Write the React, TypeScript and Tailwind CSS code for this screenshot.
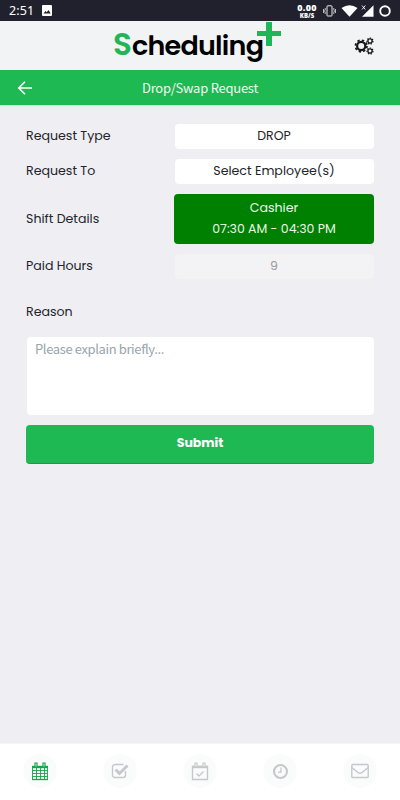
import type { ReactNode } from "react";

const poppins = "font-['Poppins','Inter',sans-serif]";
const source = "font-['Noto_Sans_CJK_SC','Noto_Sans',sans-serif]";

function StatusBar() {
  return (
    <div className="flex h-[21px] shrink-0 items-center bg-[#21212d] text-white">
      <span className="ml-[9px] w-[25px] whitespace-nowrap pt-[2px] font-['Noto_Sans',sans-serif] text-[12.5px] leading-none tracking-[0.1px]">2:51</span>
      <svg className="ml-2" width="10" height="11" viewBox="0 0 10 11">
        <rect width="10" height="11" rx="1" fill="#fff" />
        <path d="M1.5 8.5 3.5 6l1.3 1.3L6.5 5l2.2 3.5z" fill="#21212d" />
      </svg>
      <div className="ml-auto flex w-[20px] flex-col items-center pt-px font-['Open_Sans',sans-serif] font-extrabold">
        <span className="text-[9px] leading-[9px] tracking-[0.3px]">0.00</span>
        <span className="text-[6px] leading-[8px]">KB/S</span>
      </div>
      <svg className="ml-[6px]" width="13" height="12" viewBox="0 0 13 12" fill="none" stroke="#fff" strokeWidth="0.9">
        <rect x="4" y="0.8" width="5" height="10.2" rx="0.6" />
        <path d="M2.2 3v2l-.8 1 .8 1v2M10.8 3v2l.8 1-.8 1v2M.5 4v4M12.5 4v4" strokeWidth="0.7" />
      </svg>
      <svg className="ml-[5px]" width="17" height="12" viewBox="0 0 17 12">
        <path d="M.5 3Q8.5-2.6 16.5 3L8.5 11.8z" fill="#fff" />
      </svg>
      <svg className="ml-[3px]" width="13" height="12" viewBox="0 0 13 12">
        <path d="M12.5.3V11.8H1z" fill="#fff" />
        <path d="m1 .5 3.3 4M4.3.5 1 4.5" stroke="#fff" strokeWidth=".9" />
      </svg>
      <svg className="mr-[9px] ml-[5px]" width="12" height="12" viewBox="0 0 12 12">
        <circle cx="6" cy="6" r="4.8" fill="none" stroke="#fff" strokeWidth="1.9" />
      </svg>
    </div>
  );
}

function Gears() {
  return (
    <svg className="mr-[26px] ml-auto" width="20" height="20" viewBox="0 0 20 20" fill="none" stroke="#15171a">
      <circle cx="7.2" cy="10" r="4.1" strokeWidth="2.2" />
      <circle cx="7.2" cy="10" r="5.8" strokeWidth="1.7" strokeDasharray="2.3 2.255" />
      <circle cx="16" cy="5" r="2.1" strokeWidth="1.3" />
      <circle cx="16" cy="5" r="3" strokeWidth="1.2" strokeDasharray="1.4 1.293" />
      <circle cx="16" cy="15" r="2.1" strokeWidth="1.3" />
      <circle cx="16" cy="15" r="3" strokeWidth="1.2" strokeDasharray="1.4 1.293" />
    </svg>
  );
}

function Header() {
  return (
    <header className="relative flex h-[49px] shrink-0 items-center bg-[#f2f3f5]">
      <div className={`${poppins} mb-[2px] ml-[113px] flex w-[150px] items-baseline whitespace-nowrap font-semibold leading-none`}>
        <span className="text-[31px] text-[#20b657]">S</span>
        <span className="text-[27px] tracking-[-0.75px] text-black">cheduling</span>
      </div>
      <svg className="absolute top-[1px] left-[257px]" width="24" height="24" viewBox="0 0 24 24">
        <path d="M9 0h6v9h9v5h-9v10H9V14H0V9h9z" fill="#20b657" />
      </svg>
      <Gears />
    </header>
  );
}

function TitleBar() {
  return (
    <div className="relative flex h-[35px] shrink-0 items-center justify-center bg-[#1fb954] text-white shadow-[0_1px_1px_#d5e5dc]">
      <svg className="absolute top-[11px] left-[17px]" width="16" height="14" viewBox="0 0 16 14" fill="none" stroke="#fff" strokeWidth="1.6">
        <path d="M15 7H2M8 .8 1.8 7 8 13.2" />
      </svg>
      <span className={`${source} text-[13px] leading-none tracking-[-0.25px] text-[#ecfaf1]`}>Drop/Swap Request</span>
    </div>
  );
}

function Row({ label, className, children }: { label: string; className: string; children: ReactNode }) {
  return (
    <div className={`flex items-center ${className}`}>
      <span className="w-[148px] whitespace-nowrap text-[12.6px] leading-none text-[#24242b]">{label}</span>
      <div className="min-w-0 flex-1">{children}</div>
    </div>
  );
}

function Form() {
  return (
    <main className={`${poppins} flex flex-1 flex-col bg-[#eeeef3] px-[26px] pt-[19px]`}>
      <div className="flex flex-col gap-[10px]">
        <Row label="Request Type" className="h-[25px]">
          <div className="mr-[0.5px] ml-[0.5px] flex h-[25px] items-center justify-center rounded-[4px] bg-white pb-[1px] text-[12.5px] text-[#24242b]">DROP</div>
        </Row>
        <Row label="Request To" className="h-[25px]">
          <div className="mr-[0.5px] ml-[0.5px] flex h-[25px] items-center justify-center rounded-[4px] bg-white pb-px text-[12.6px] text-[#24242b]">Select Employee(s)</div>
        </Row>
        <Row label="Shift Details" className="h-[50px]">
          <div className="flex h-[50px] flex-col items-center rounded-[4px] bg-[#008000] pt-[3px] text-[12.6px] leading-[21px] text-[#e9f7e9]">
            <span>Cashier</span>
            <span className="whitespace-nowrap text-[12.5px]">07:30 AM - 04:30 PM</span>
          </div>
        </Row>
        <Row label="Paid Hours" className="h-[25px]">
          <div className="mr-[0.5px] ml-[0.5px] flex h-[25px] items-center justify-center rounded-[4px] bg-[#f3f3f5] pb-[1px] text-[12.6px] text-[#9b9ba0]">9</div>
        </Row>
      </div>
      <span className="mt-[26px] text-[12.6px] leading-[14px] text-[#24242b]">Reason</span>
      <div className={`${source} mt-[18px] mr-[0.5px] ml-[0.5px] h-[78px] rounded-[4px] bg-white px-[8.5px] pt-[3px] text-[13px] leading-[18px] tracking-[-0.38px] text-[#98a5ab]`}>
        Please explain briefly...
      </div>
      <button className="mt-[10px] h-[39px] rounded-[4px] border-b border-[#189b45] bg-[#1fb954] pb-px text-[12.5px] font-bold text-white">Submit</button>
    </main>
  );
}

function Tab({ children }: { children: ReactNode }) {
  return (
    <div className="flex flex-1 justify-center">
      <div className="flex h-[34px] w-[34px] items-center justify-center rounded-full bg-[#fafcfb]">{children}</div>
    </div>
  );
}

function TabBar() {
  return (
    <nav className="flex h-[56px] shrink-0 items-center bg-white pb-[2px]">
      <Tab>
        <svg width="18" height="19" viewBox="0 0 18 19" fill="none" stroke="#16a34b">
          <path d="M1.5 4.5V17.5h15V4.5M1.5 8.5h15M1.5 11.5h15M1.5 14.5h15M5.5 6v11.5M9.5 6v11.5M13.5 6v11.5" strokeWidth=".9" />
          <path d="M1 5h16" strokeWidth="2.4" />
          <path d="M1 17.5h16" strokeWidth="1.3" />
          <path d="M4 1h2v4H4zM12 1h2v4h-2z" fill="#fff" strokeWidth="1.2" />
        </svg>
      </Tab>
      <Tab>
        <svg width="18" height="18" viewBox="0 0 18 18" fill="none" stroke="#c5c8cb">
          <path d="M14.5 9v4a2.5 2.5 0 0 1-2.5 2.5H4A2.5 2.5 0 0 1 1.5 13V5A2.5 2.5 0 0 1 4 2.5h8.5" strokeWidth="1.4" />
          <path d="m4.5 7.5 4 4L16.5 3.5" strokeWidth="2.9" />
        </svg>
      </Tab>
      <Tab>
        <svg width="18" height="19" viewBox="0 0 18 19" fill="none" stroke="#c5c8cb">
          <path d="M1.5 4.5h15v13h-15z" strokeWidth="1.4" />
          <path d="M1 5h16" strokeWidth="2.4" />
          <path d="M4 1h2v4H4zM12 1h2v4h-2z" fill="#fff" strokeWidth="1.2" />
          <path d="m5.5 11.5 2.5 2.5 4.5-4.5" strokeWidth="1.4" />
        </svg>
      </Tab>
      <Tab>
        <svg width="17" height="17" viewBox="0 0 17 17" fill="none" stroke="#c5c8cb">
          <circle cx="8.5" cy="8.5" r="6.5" strokeWidth="2.1" />
          <path d="M9 4.5v4.7H6" strokeWidth="1.3" />
        </svg>
      </Tab>
      <Tab>
        <svg width="18" height="16" viewBox="0 0 18 16" fill="none" stroke="#c5c8cb" strokeWidth="1.4">
          <rect x=".8" y="1.5" width="16.4" height="13" rx="1" />
          <path d="M1 4.5c2 2 4 3.5 6 5q2 1.5 4 0c2-1.5 4-3 6-5" />
        </svg>
      </Tab>
    </nav>
  );
}

export default function App() {
  return (
    <div className="flex h-[800px] w-[400px] flex-col overflow-hidden bg-white">
      <StatusBar />
      <Header />
      <TitleBar />
      <Form />
      <div className="h-px shrink-0 bg-[#f6f6f8]" />
      <TabBar />
    </div>
  );
}
